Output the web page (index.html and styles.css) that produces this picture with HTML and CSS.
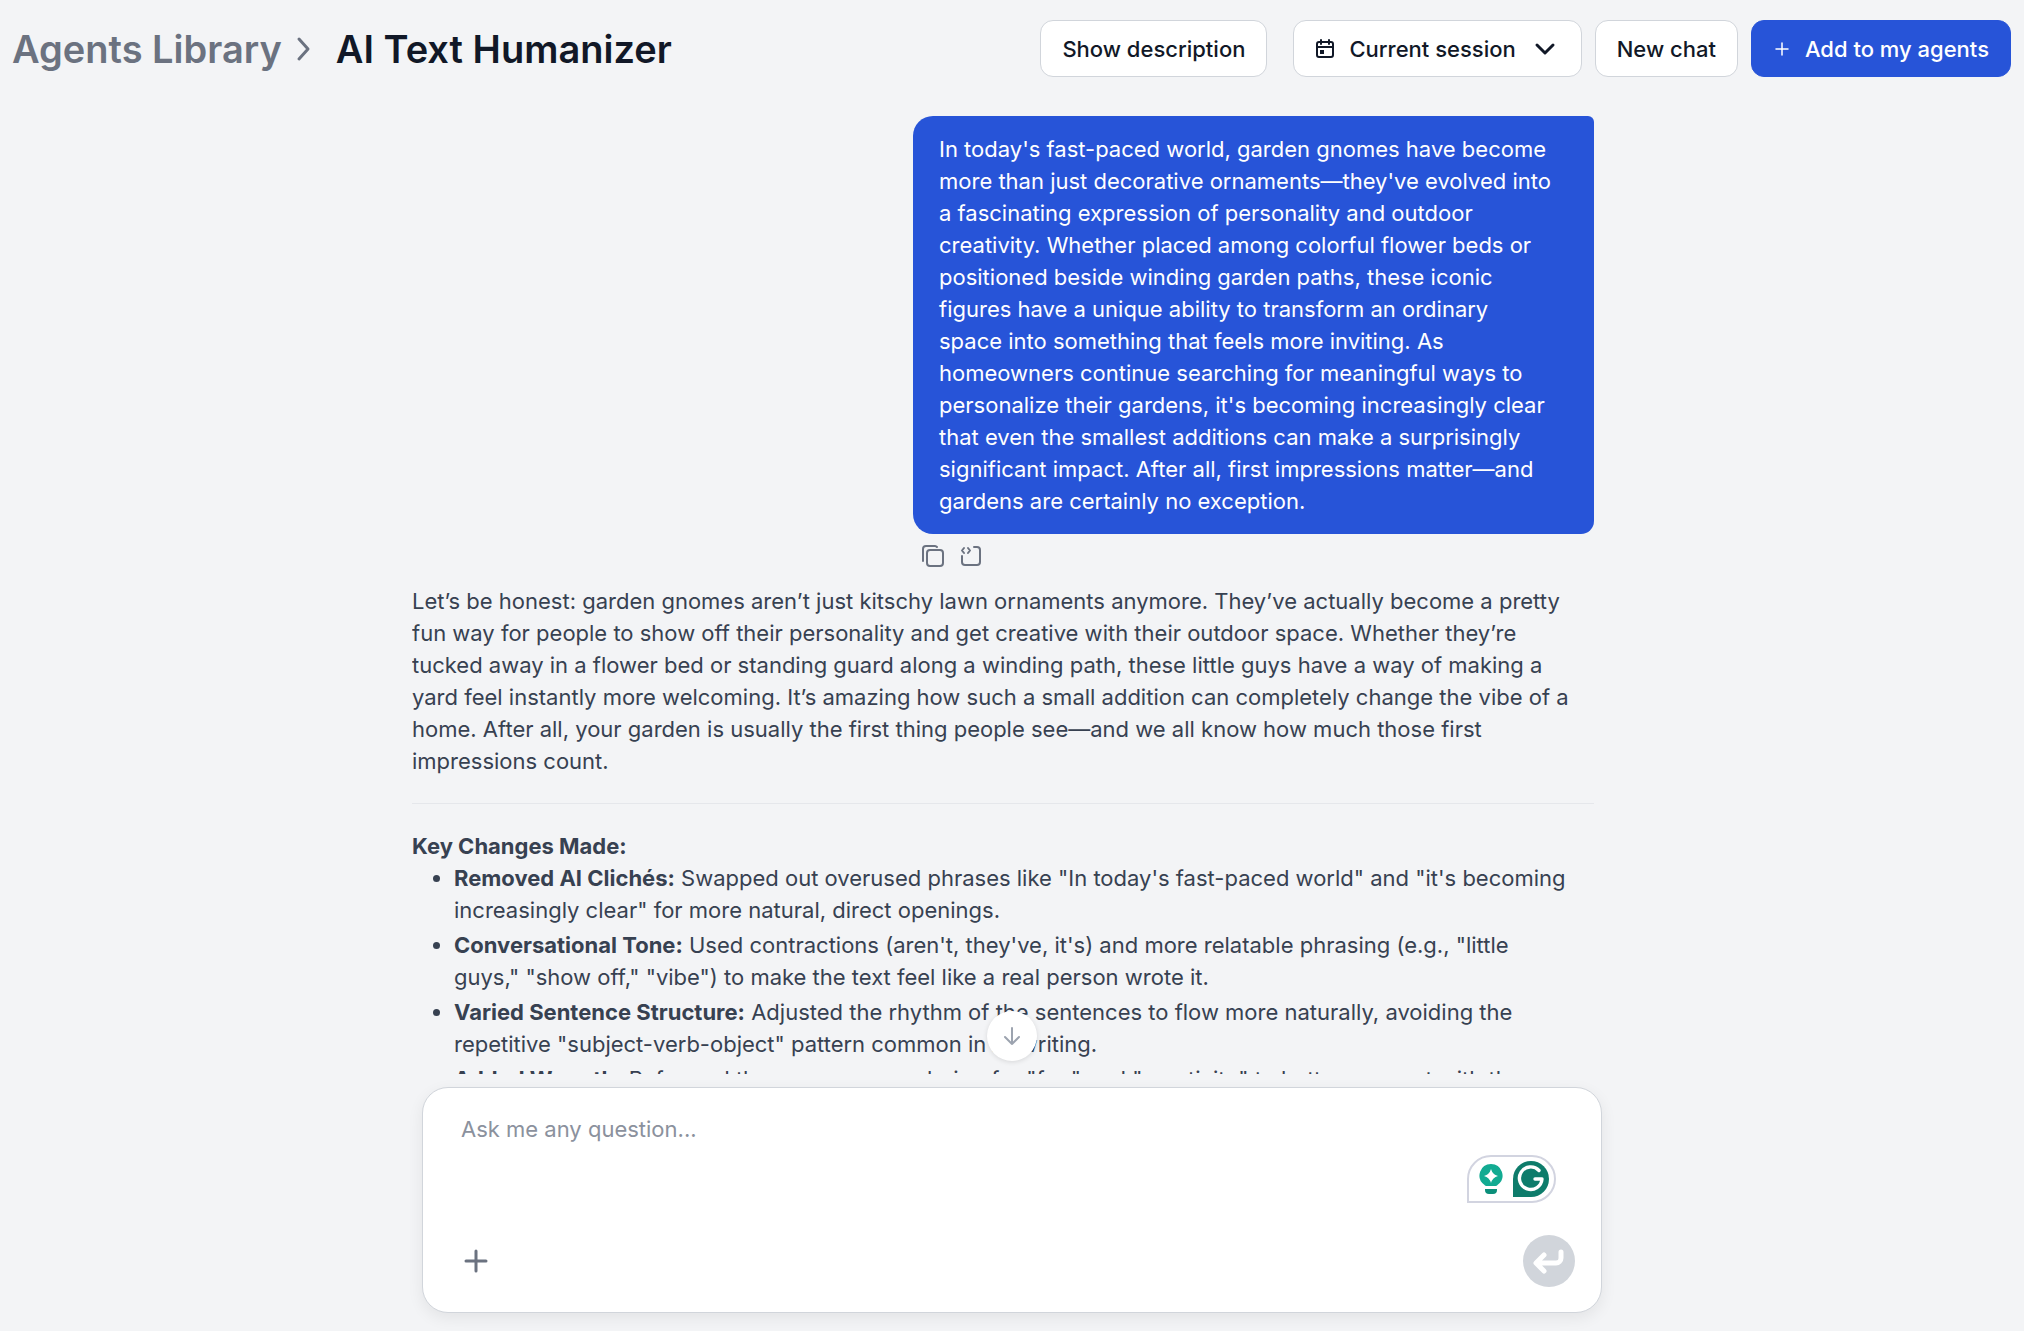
FILE: index.html
```html
<!DOCTYPE html>
<html lang="en">
<head>
    <meta charset="UTF-8">
    <meta name="viewport" content="width=device-width, initial-scale=1.0">
    <title>AI Text Humanizer</title>
    <link rel="stylesheet" href="styles.css">
</head>
<body>
    <header class="topbar">
        <nav class="breadcrumb">
            <a class="crumb" href="#">Agents Library</a>
            <svg class="crumb-arrow" width="16" height="28" viewBox="0 0 16 28"><path d="M3 4l9 10-9 10"/></svg>
            <h1 class="title">AI Text Humanizer</h1>
        </nav>
        <div class="actions">
            <button type="button" class="btn btn-description">Show description</button>
            <button type="button" class="btn btn-session">
                <svg class="icon-calendar" width="20" height="22" viewBox="0 0 20 22">
                    <rect x="2" y="4" width="16" height="15" rx="2"/>
                    <path d="M2 9h16M6 2v4M14 2v4"/>
                    <rect class="day" x="5" y="12" width="4" height="4"/>
                </svg>
                <span>Current session</span>
                <svg class="icon-down" width="22" height="22" viewBox="0 0 22 22"><path d="M3 7l8 8 8-8"/></svg>
            </button>
            <button type="button" class="btn">New chat</button>
            <button type="button" class="btn btn-primary">
                <svg class="icon-add" width="18" height="18" viewBox="0 0 18 18"><path d="M9 3v12M3 9h12"/></svg>
                <span>Add to my agents</span>
            </button>
        </div>
    </header>

    <main class="chat">
        <div class="messages">
            <!-- User message -->
            <div class="user">
                <p class="bubble">In today's fast-paced world, garden gnomes have become more than just decorative ornaments—they've evolved into a fascinating expression of personality and outdoor creativity. Whether placed among colorful flower beds or positioned beside winding garden paths, these iconic figures have a unique ability to transform an ordinary space into something that feels more inviting. As homeowners continue searching for meaningful ways to personalize their gardens, it's becoming increasingly clear that even the smallest additions can make a surprisingly significant impact. After all, first impressions matter—and gardens are certainly no exception.</p>
                <div class="tools">
                    <button type="button" class="tool" aria-label="Copy">
                        <svg width="24" height="24" viewBox="0 0 24 24"><rect x="6" y="6" width="16" height="16" rx="3"/><path d="M2 17V5a3 3 0 0 1 3-3h9a3 3 0 0 1 2 1"/></svg>
                    </button>
                    <button type="button" class="tool" aria-label="Copy as code">
                        <svg width="24" height="24" viewBox="0 0 24 24"><path d="M15 3h3a3 3 0 0 1 3 3v12a3 3 0 0 1-3 3H6a3 3 0 0 1-3-3v-6M5 4L3 6.500l2 2.500M9 4l2 2.500L9 9"/></svg>
                    </button>
                </div>
            </div>

            <!-- Agent answer -->
            <article class="answer">
                <p>Let’s be honest: garden gnomes aren’t just kitschy lawn ornaments anymore. They’ve actually become a pretty fun way for people to show off their personality and get creative with their outdoor space. Whether they’re tucked away in a flower bed or standing guard along a winding path, these little guys have a way of making a yard feel instantly more welcoming. It’s amazing how such a small addition can completely change the vibe of a home. After all, your garden is usually the first thing people see—and we all know how much those first impressions count.</p>
                <hr>
                <p><strong>Key Changes Made:</strong></p>
                <ul>
                    <li><strong>Removed AI Clichés:</strong> Swapped out overused phrases like "In today's fast-paced world" and "it's becoming increasingly clear" for more natural, direct openings.</li>
                    <li><strong>Conversational Tone:</strong> Used contractions (aren't, they've, it's) and more relatable phrasing (e.g., "little guys," "show off," "vibe") to make the text feel like a real person wrote it.</li>
                    <li><strong>Varied Sentence Structure:</strong> Adjusted the rhythm of the sentences to flow more naturally, avoiding the repetitive "subject-verb-object" pattern common in AI writing.</li>
                    <li><strong>Added Warmth:</strong> Reframed the gnome use as being for "fun" and "creativity" to better connect with the reader.</li>
                </ul>
            </article>
        </div>
        <button type="button" class="scroll-down" aria-label="Scroll to bottom">
            <svg width="24" height="24" viewBox="0 0 24 24"><path d="M12 4v16M5 13l7 7 7-7"/></svg>
        </button>
    </main>

    <form class="composer">
        <textarea class="question" aria-label="Question" placeholder="Ask me any question..."></textarea>
        <div class="composer-bar">
            <button type="button" class="attach" aria-label="Add attachment">
                <svg width="26" height="26" viewBox="0 0 26 26"><path d="M13 3v20M3 13h20"/></svg>
            </button>
            <button type="submit" class="send" aria-label="Send">
                <svg width="34" height="30" viewBox="0 0 34 30"><path d="M29 6v6a5 5 0 0 1-5 5H5M12 9l-8 8 8 8"/></svg>
            </button>
        </div>
        <!-- Writing assistant badge -->
        <div class="assistant">
            <svg width="24" height="32" viewBox="0 0 24 32">
                <path fill="#12ab92" d="M12 1a11.500 11.500 0 0 0-7 20.600q1 1.400 2 1.400h10q1 0 2-1.400A11.500 11.500 0 0 0 12 1z"/>
                <path fill="#fff" d="M12 6q1.500 5.500 7 7-5.500 1.500-7 7-1.500-5.500-7-7 5.500-1.500 7-7z"/>
                <path fill="#0b8f7a" d="M6 26h12v1a4 4 0 0 1-4 4h-4a4 4 0 0 1-4-4z"/>
            </svg>
            <svg width="36" height="36" viewBox="0 0 36 36">
                <path fill="#0e7c6b" d="M18 0a18 18 0 0 1 0 36H0V18A18 18 0 0 1 18 0z"/>
                <path fill="none" stroke="#fff" stroke-width="3.400" d="M26 9.500A11.300 11.300 0 1 0 29 18h-7"/>
            </svg>
        </div>
    </form>
</body>
</html>
```
FILE: styles.css
```css
* {
    box-sizing: border-box;
}
body {
    font-family: Inter, "Liberation Sans", sans-serif;
    font-size: 22px;
    line-height: 32px;
    background-color: #f3f4f6;
    color: #374151;
    margin: 0;
    height: 100vh;
    display: flex;
    flex-direction: column;
    align-items: center;
    overflow: hidden;
}
button {
    font: inherit;
    cursor: pointer;
}
svg {
    flex-shrink: 0;
    fill: none;
    stroke-linecap: round;
    stroke-linejoin: round;
}

/* Header */
.topbar {
    width: 100%;
    padding: 20px 13px 20px 12px;
    display: flex;
    justify-content: space-between;
    align-items: center;
}
.breadcrumb {
    display: flex;
    align-items: center;
    font-size: 38px;
    font-weight: 600;
}
.crumb {
    color: #6b7280;
    text-decoration: none;
}
.crumb-arrow {
    margin: 0 24px 0 14px;
    stroke: #6b7280;
    stroke-width: 3;
}
.title {
    margin: 0;
    font-size: 38px;
    font-weight: 600;
    color: #111827;
}
.actions {
    display: flex;
    gap: 13px;
}
.btn {
    display: flex;
    align-items: center;
    gap: 14px;
    height: 57px;
    padding: 0 21px;
    background-color: #fff;
    border: 1px solid #d1d5db;
    border-radius: 13px;
    color: #111827;
    font-weight: 500;
}
.btn-description {
    margin-right: 13px;
}
.btn-session {
    padding: 0 25px 0 21px;
}
.btn-session .icon-down {
    margin-left: 4px;
}
.btn-primary {
    background-color: #2754d8;
    border-color: #2754d8;
    color: #fff;
}
.icon-calendar {
    stroke: #111827;
    stroke-width: 2;
}
.icon-calendar .day {
    fill: #111827;
    stroke: none;
}
.icon-down {
    stroke: #111827;
    stroke-width: 3;
}
.icon-add {
    stroke: #fff;
    stroke-width: 1.5;
}

/* Messages */
.chat {
    flex: 1;
    min-height: 0;
    width: 100%;
    max-width: 1200px;
    margin-bottom: 13px;
    position: relative;
    overflow: hidden;
}
.messages {
    padding: 19px 18px 0 0;
}
.user {
    display: flex;
    flex-direction: column;
    width: 681px;
    max-width: 100%;
    margin-left: auto;
}
.bubble {
    margin: 0;
    padding: 17px 40px 17px 26px;
    background-color: #2754d8;
    border-radius: 20px 6px 13px 20px;
    color: #fff;
}
.tools {
    display: flex;
    gap: 14px;
    padding: 10px 8px 17px;
}
.tool {
    display: flex;
    padding: 0;
    background: none;
    border: none;
}
.tool svg {
    stroke: #6b7280;
    stroke-width: 2;
}
.answer p {
    margin: 0;
    padding-right: 20px;
}
.answer hr {
    margin: 26px 0;
    border: none;
    border-top: 1px solid #e5e7eb;
}
.answer ul {
    margin: 0;
    padding: 0 20px 0 42px;
}
.answer li {
    margin-bottom: 3px;
}
.scroll-down {
    position: absolute;
    left: 50%;
    bottom: 13px;
    width: 50px;
    height: 50px;
    margin-left: -25px;
    padding: 0;
    display: flex;
    align-items: center;
    justify-content: center;
    background-color: #fff;
    border: none;
    border-radius: 50%;
    box-shadow: 0 1px 5px rgba(0,0,0,0.12);
}
.scroll-down svg {
    stroke: #9ca3af;
    stroke-width: 2;
}

/* Question box */
.composer {
    position: relative;
    width: 100%;
    max-width: 1180px;
    margin-bottom: 18px;
    padding: 25px 26px 25px 24px;
    background-color: #fff;
    border: 1px solid #d1d5db;
    border-radius: 26px;
    box-shadow: 0 5px 16px rgba(0,0,0,0.07);
}
.question {
    display: block;
    width: 100%;
    height: 122px;
    padding: 0 14px;
    border: none;
    outline: none;
    resize: none;
    font: inherit;
    color: #374151;
}
.question::placeholder {
    color: #8b919d;
}
.composer-bar {
    display: flex;
    justify-content: space-between;
    align-items: center;
}
.attach {
    display: flex;
    margin-left: 16px;
    padding: 0;
    background: none;
    border: none;
}
.attach svg {
    stroke: #6b7280;
    stroke-width: 3;
}
.send {
    display: flex;
    align-items: center;
    justify-content: center;
    width: 52px;
    height: 52px;
    padding: 0;
    background-color: #d1d5db;
    border: none;
    border-radius: 50%;
}
.send svg {
    stroke: #fff;
    stroke-width: 5;
}
.assistant {
    position: absolute;
    right: 45px;
    top: 67px;
    display: flex;
    align-items: center;
    gap: 10px;
    height: 48px;
    padding: 0 5px 0 10px;
    background-color: #fff;
    border: 2px solid #d2d4e0;
    border-radius: 24px 24px 24px 0;
}
```
